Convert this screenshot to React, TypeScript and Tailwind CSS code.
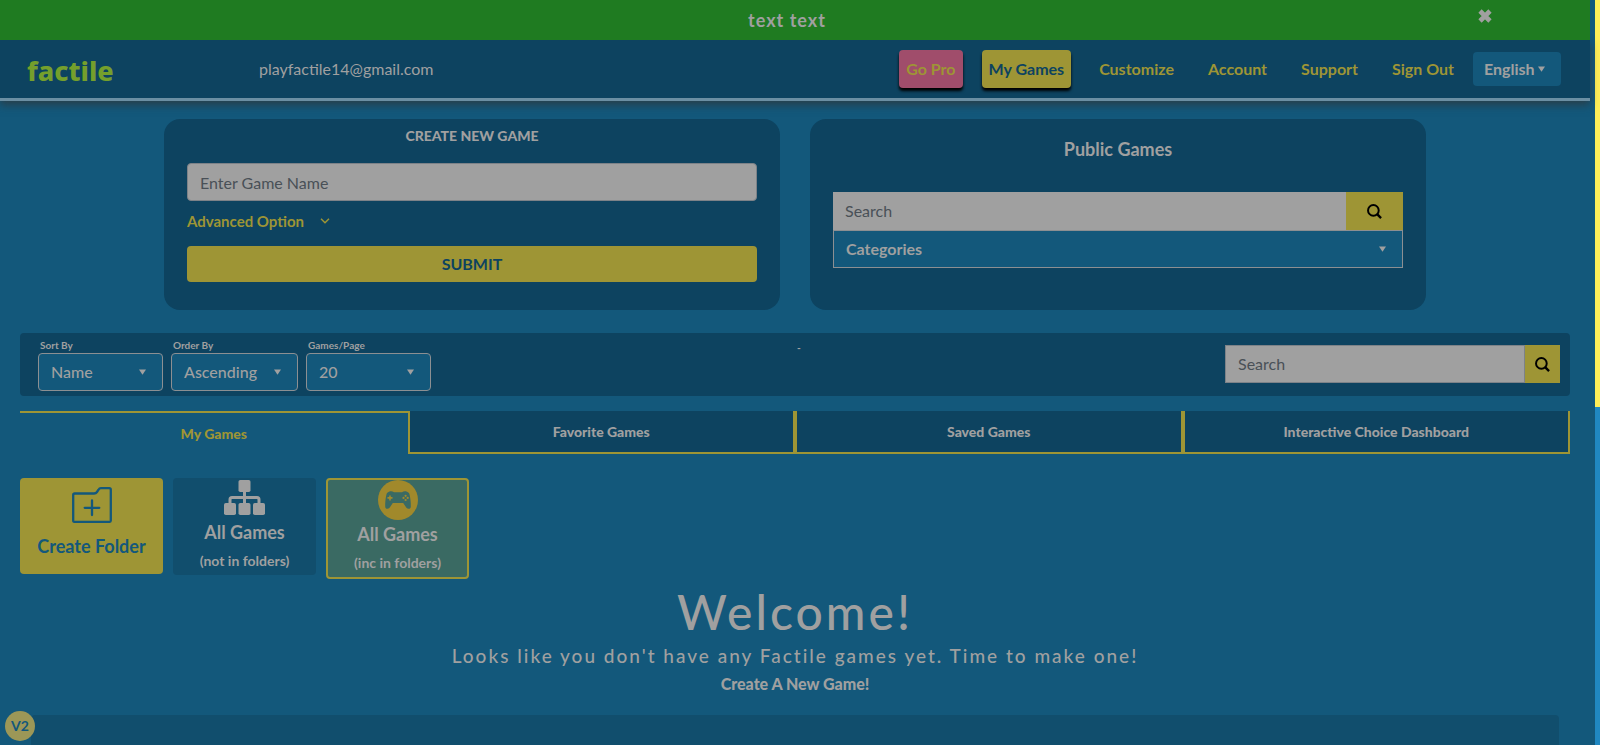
import type { ReactNode } from "react";

const navLinks = ["Customize", "Account", "Support", "Sign Out"];

const tabs = ["Favorite Games", "Saved Games", "Interactive Choice Dashboard"];

const filters = [
  { id: "sort", label: "Sort By", options: ["Name", "Date"], width: "w-[125px]" },
  { id: "order", label: "Order By", options: ["Ascending", "Descending"], width: "w-[127px]" },
  { id: "per-page", label: "Games/Page", options: ["20", "50", "100"], width: "w-[125px]" },
];

function SearchIcon() {
  return (
    <svg viewBox="0 0 16 16" className="size-[15px]" fill="none" stroke="#000" strokeWidth="2.100" aria-hidden="true">
      <circle cx="6.800" cy="6.800" r="5.700" />
      <path d="M10.500 10.500 15 15" strokeWidth="2.500" />
    </svg>
  );
}

function Caret({ className }: { className: string }) {
  return (
    <svg viewBox="0 0 8 6" className={`h-[6px] w-[7px] ${className}`} fill="#a0a0a0" aria-hidden="true">
      <path d="M0 0h8L4 6z" />
    </svg>
  );
}

function FolderPlusIcon() {
  return (
    <svg viewBox="0 0 40 36" className="h-9 w-10" fill="none" stroke="#13587b" strokeWidth="2.300" aria-hidden="true">
      <path d="M1.200 33.500V8q0-1.500 1.500-1.500H22q2 0 3-1.500l1.500-2.300Q27.300 1.200 29 1.200h8.300q1.500 0 1.500 1.500v30.800q0 1.300-1 1.300H2.200q-1 0-1-1.300z" />
      <path d="M20 13.500v14.500M12.700 20.800h14.600" strokeLinecap="round" />
    </svg>
  );
}

function SitemapIcon() {
  return (
    <svg viewBox="0 0 41 35" className="h-[35px] w-[41px]" fill="#a0a0a0" aria-hidden="true">
      <rect x="14.500" y="0" width="12" height="12" rx="1.800" />
      <rect x="0" y="23" width="12" height="12" rx="1.800" />
      <rect x="14.500" y="23" width="12" height="12" rx="1.800" />
      <rect x="29" y="23" width="12" height="12" rx="1.800" />
      <path d="M20.500 11v13M6 24v-4.500q0-2 2-2h25q2 0 2 2V24" fill="none" stroke="#a0a0a0" strokeWidth="3" />
    </svg>
  );
}

function GamepadIcon() {
  return (
    <svg viewBox="0 0 40 40" className="size-10" aria-hidden="true">
      <circle cx="20" cy="20" r="20" fill="#a1892b" />
      <path
        fill="#3a6a63"
        d="M11 11.800c1.500-.7 3.600-.6 5 .4h8c1.400-1 3.500-1.100 5-.4 1.300.5 2.300 1.300 2.600 2.900.9 4.200 1.300 8 1.200 11.800 0 1.500-1 2.500-2.300 2.300-1.500-.2-2.300-1.200-3.100-2.500l-2.200-3.200H14.800l-2.200 3.200c-.8 1.300-1.600 2.300-3.100 2.500-1.300.2-2.300-.8-2.300-2.300-.1-3.800.3-7.600 1.200-11.800.3-1.600 1.300-2.400 2.600-2.900z"
      />
      <path d="M12 15.400v5M9.500 17.900h5" stroke="#a1892b" strokeWidth="1.600" />
      <g fill="#a1892b">
        <circle cx="27.600" cy="15.800" r="1.100" />
        <circle cx="27.600" cy="20" r="1.100" />
        <circle cx="25.500" cy="17.900" r="1.100" />
        <circle cx="29.700" cy="17.900" r="1.100" />
      </g>
    </svg>
  );
}

function Card({ children }: { children: ReactNode }) {
  return <section className="h-[191px] rounded-2xl bg-[#0d4360] px-[23px]">{children}</section>;
}

function Header() {
  return (
    <header className="flex h-[61px] shrink-0 items-center border-b-3 border-[#6b8fa3] bg-[#0d4360] pr-[29px] pl-[27px] shadow-[0_4px_8px_#333a]">
      <a href="#" className="w-[232px] pt-1 font-['Noto_Sans',sans-serif] text-[27px] leading-8 font-extrabold text-[#759f2c]">
        factile
      </a>
      <span className="text-base">playfactile14@gmail.com</span>
      <nav className="ml-auto flex items-center text-base font-bold text-[#9e9535]">
        <a href="#" className="mr-[19px] rounded-sm bg-[#a04d6b] px-[7px] py-[7px] shadow-[0_3px_3px_#000]">
          Go Pro
        </a>
        <a href="#" className="mr-7 rounded-sm bg-[#9e9535] px-[7px] py-[7px] text-[#0d4360] shadow-[0_3px_3px_#000]">
          My Games
        </a>
        {navLinks.map((link) => (
          <a key={link} href="#" className="mr-[34px] last-of-type:mr-[19px]">
            {link}
          </a>
        ))}
        <button className="flex h-[34px] w-[88px] items-center gap-[3px] rounded-sm bg-[#13587b] pl-[11px] font-bold text-[#a0a0a0]">
          English
          <Caret className="" />
        </button>
      </nav>
    </header>
  );
}

function CreateCard() {
  return (
    <Card>
      <h2 className="pt-[7px] text-center text-sm leading-5 font-black">CREATE NEW GAME</h2>
      <input
        aria-label="Game name"
        placeholder="Enter Game Name"
        className="mt-[17px] block h-[38px] w-full rounded-sm border border-[#7d8288] bg-[#a0a0a0] px-3 text-base placeholder:text-[#495057]"
      />
      <button className="mt-2 flex h-6 items-center gap-4 text-[15px] font-bold text-[#9e9535]">
        Advanced Option
        <svg viewBox="0 0 10 6" className="h-[6px] w-[10px]" fill="none" stroke="#9e9535" strokeWidth="1.500" aria-hidden="true">
          <path d="m1 .8 4 4 4-4" />
        </svg>
      </button>
      <button className="mt-[13px] block h-9 w-full rounded-sm bg-[#9e9535] text-base font-bold text-[#0d4360]">SUBMIT</button>
    </Card>
  );
}

function PublicCard() {
  return (
    <Card>
      <h2 className="pt-[18px] text-center text-lg leading-6 font-bold">Public Games</h2>
      <div className="mt-[31px] flex h-[38px]">
        <input
          aria-label="Search public games"
          placeholder="Search"
          className="min-w-0 flex-1 bg-[#a0a0a0] px-3 text-base placeholder:text-[#495057]"
        />
        <button aria-label="Search" className="flex w-[57px] items-center justify-center bg-[#9e9535]">
          <SearchIcon />
        </button>
      </div>
      <div className="relative">
        <select
          aria-label="Categories"
          className="h-[38px] w-full appearance-none border border-[#8c8f92] bg-[#13587b] px-3 text-base font-bold"
        >
          <option>Categories</option>
        </select>
        <Caret className="pointer-events-none absolute top-4 right-[17px]" />
      </div>
    </Card>
  );
}

function Toolbar() {
  return (
    <section className="mx-5 mt-[23px] flex h-[63px] shrink-0 rounded bg-[#0d4360] pr-[10px] pl-[18px]">
      <div className="flex gap-2 pt-[5px]">
        {filters.map((f) => (
          <div key={f.id}>
            <label htmlFor={f.id} className="block pl-[2px] text-[10px] leading-[15px] font-bold">
              {f.label}
            </label>
            <div className="relative">
              <select
                id={f.id}
                className={`block h-[38px] appearance-none rounded-sm border border-[#8c8f92] bg-[#13587b] pl-3 text-base font-medium ${f.width}`}
              >
                {f.options.map((o) => (
                  <option key={o}>{o}</option>
                ))}
              </select>
              <Caret className="pointer-events-none absolute top-4 right-[17px]" />
            </div>
          </div>
        ))}
      </div>
      <div className="flex flex-1 pt-[2px] pl-[366px] text-[10px] leading-6 font-black">
        <span>-</span>
      </div>
      <div className="mt-3 flex h-[38px] w-[335px]">
        <input
          aria-label="Search my games"
          placeholder="Search"
          className="min-w-0 flex-1 border border-[#7d8288] bg-[#a0a0a0] px-3 text-base placeholder:text-[#495057]"
        />
        <button aria-label="Search" className="flex w-[35px] items-center justify-center bg-[#9e9535]">
          <SearchIcon />
        </button>
      </div>
    </section>
  );
}

function Tabs() {
  return (
    <div role="tablist" className="mx-5 mt-[15px] grid h-[43px] shrink-0 grid-cols-4 text-sm font-black">
      <button role="tab" aria-selected="true" className="border-t-2 border-[#9e9535] text-[#9e9535]">
        My Games
      </button>
      {tabs.map((t) => (
        <button key={t} role="tab" aria-selected="false" className="border-x-2 border-b-2 border-[#9e9535] bg-[#0d4360]">
          {t}
        </button>
      ))}
    </div>
  );
}

function Folders() {
  return (
    <div className="mt-6 flex shrink-0 items-start gap-[10px] px-5">
      <button className="flex h-24 w-[143px] flex-col items-center rounded bg-[#9e9535] pt-[9px] text-[#13587b]">
        <FolderPlusIcon />
        <span className="mt-[11px] text-lg leading-6 font-bold">Create Folder</span>
      </button>
      <button className="flex h-[97px] w-[143px] flex-col items-center rounded bg-[#114e6d] pt-[2px]">
        <SitemapIcon />
        <span className="mt-[5px] text-lg leading-6 font-bold">All Games</span>
        <span className="mt-[7px] text-sm leading-5 font-bold">(not in folders)</span>
      </button>
      <button className="flex h-[101px] w-[143px] flex-col items-center rounded border-2 border-[#9e9535] bg-[#3a6a63]">
        <GamepadIcon />
        <span className="mt-[2px] text-lg leading-6 font-bold">All Games</span>
        <span className="mt-[7px] text-sm leading-5 font-bold">(inc in folders)</span>
      </button>
    </div>
  );
}

export default function App() {
  return (
    <div className="flex h-screen overflow-hidden bg-[#13587b] font-['Lato',sans-serif] text-[#a0a0a0]">
      <main className="relative flex min-w-0 flex-1 flex-col">
        <div className="relative flex h-10 shrink-0 items-center justify-center bg-[#1f7b21] pr-4 text-lg font-bold tracking-[1px]">
          text text
          <button aria-label="Close" className="absolute top-[9px] right-[98px]">
            <svg viewBox="0 0 14 14" className="size-[14px]" stroke="#a0a0a0" strokeWidth="4.600" aria-hidden="true">
              <path d="m2 2 10 10M12 2 2 12" />
            </svg>
          </button>
        </div>
        <Header />
        <div className="mx-auto mt-[18px] grid w-full max-w-[1262px] shrink-0 grid-cols-2 gap-[30px]">
          <CreateCard />
          <PublicCard />
        </div>
        <Toolbar />
        <Tabs />
        <Folders />
        <section className="mt-[5px] shrink-0 text-center">
          <h1 className="text-5xl leading-[56px] font-medium tracking-[3px]">Welcome!</h1>
          <p className="mt-1 text-[19px] leading-6 font-medium tracking-[2px]">
            Looks like you don't have any Factile games yet. Time to make one!
          </p>
          <a href="#" className="mt-1 block text-base leading-6 font-black">
            Create A New Game!
          </a>
        </section>
        <div className="mx-[31px] mt-[19px] flex-1 rounded-t bg-[#114e6d]" />
        <button className="absolute bottom-1 left-[5px] size-[30px] rounded-full bg-[#9c9757] text-sm font-bold text-[#13587b]">
          V2
        </button>
      </main>
      <div className="ml-[5px] w-[5px] bg-[#2088c2]">
        <div className="h-[407px] bg-[#ffee58]" />
      </div>
    </div>
  );
}
